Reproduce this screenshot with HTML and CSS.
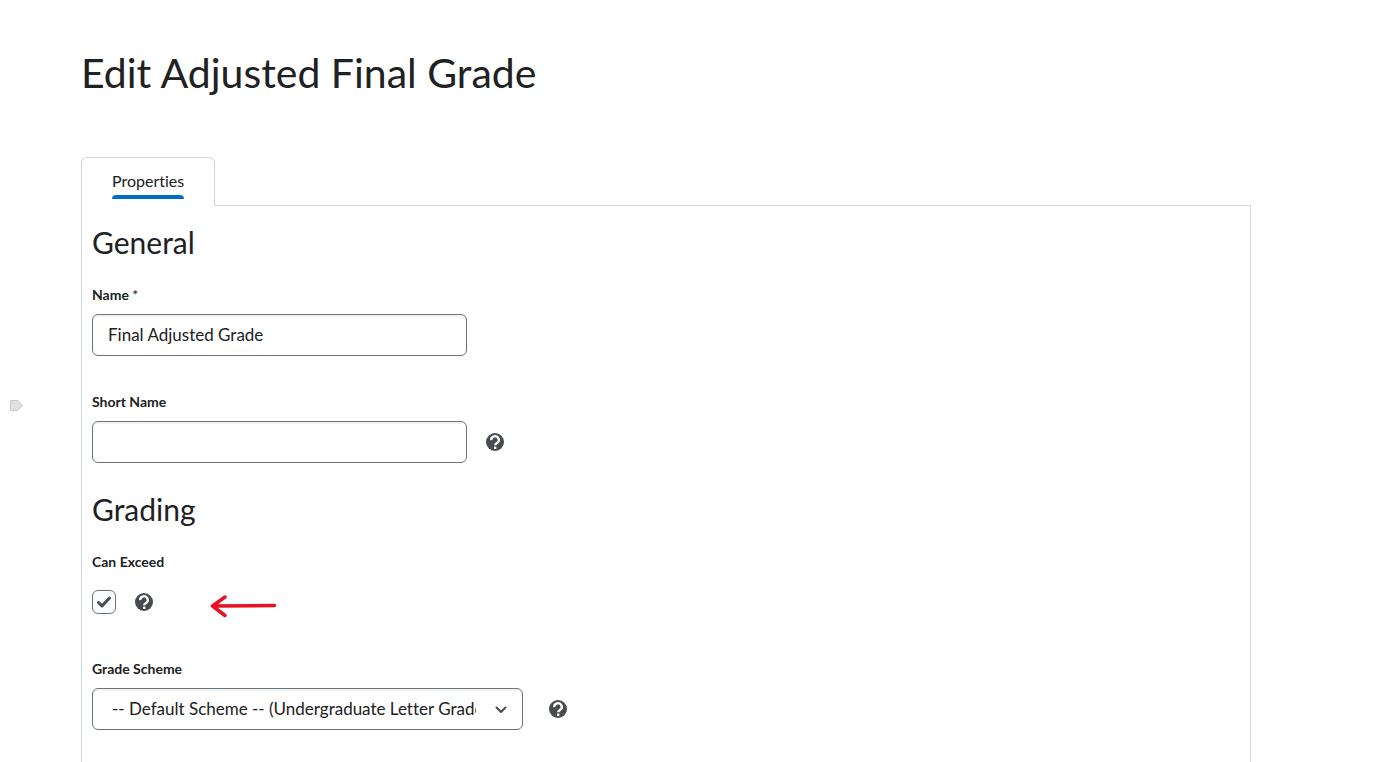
FILE: index.html
```html
<!DOCTYPE html>
<html lang="en">
<head>
    <meta charset="UTF-8">
    <meta name="viewport" content="width=device-width, initial-scale=1.0">
    <title>Edit Adjusted Final Grade</title>
    <link rel="stylesheet" href="styles.css">
</head>
<body>
    <!-- Shared icon -->
    <svg class="icon-defs" aria-hidden="true">
        <symbol id="icon-help" viewBox="0 0 18 18">
            <circle cx="9" cy="9" r="9" fill="#494c4e"/>
            <path d="M5.200 7.200A3.800 3.600 0 1 1 11 9.900C9.800 10.600 9.200 10.900 9.200 12.300" fill="none" stroke="#fff" stroke-width="2.300"/>
            <rect x="8" y="13.600" width="2.400" height="2.400" rx="0.500" fill="#fff"/>
        </symbol>
    </svg>

    <svg class="side-marker" viewBox="0 0 13 11" aria-hidden="true">
        <path d="M0.500 0.500h7.500l4.500 5-4.500 5h-7.500z" fill="#e1e1e1" stroke="#cacaca"/>
    </svg>

    <main class="page">
        <h1 class="page-title">Edit Adjusted Final Grade</h1>

        <div class="tabs" role="tablist">
            <button type="button" class="tab" role="tab" aria-selected="true">
                <span class="tab-text">Properties</span>
            </button>
        </div>

        <form class="panel">
            <section class="section">
                <h2 class="section-title">General</h2>
                <div class="fields">
                    <div class="field">
                        <label for="name">Name <span class="required">*</span></label>
                        <div class="control">
                            <input type="text" class="text-input" id="name" name="name" value="Final Adjusted Grade" required>
                        </div>
                    </div>
                    <div class="field">
                        <label for="shortName">Short Name</label>
                        <div class="control">
                            <input type="text" class="text-input" id="shortName" name="shortName">
                            <button type="button" class="help" aria-label="Short Name help">
                                <svg><use href="#icon-help"/></svg>
                            </button>
                        </div>
                    </div>
                </div>
            </section>

            <section class="section">
                <h2 class="section-title">Grading</h2>
                <div class="fields">
                    <div class="field">
                        <label for="canExceed">Can Exceed</label>
                        <div class="control">
                            <span class="checkbox-wrap">
                                <input type="checkbox" class="checkbox" id="canExceed" name="canExceed" checked>
                                <svg class="check" viewBox="0 0 24 24" aria-hidden="true">
                                    <path d="M6.500 12.500l3.500 3.500 7.500-8" fill="none" stroke="#494c4e" stroke-width="3" stroke-linecap="round" stroke-linejoin="round"/>
                                </svg>
                            </span>
                            <button type="button" class="help" aria-label="Can Exceed help">
                                <svg><use href="#icon-help"/></svg>
                            </button>
                            <svg class="arrow" viewBox="0 0 68 34" aria-hidden="true">
                                <path d="M65.500 20.500L3.500 21M16 12L3.500 21L16 30.500" fill="none" stroke="#e81123" stroke-width="3.500" stroke-linecap="round" stroke-linejoin="round"/>
                            </svg>
                        </div>
                    </div>
                    <div class="field">
                        <label for="gradeScheme">Grade Scheme</label>
                        <div class="control control-select">
                            <span class="select-wrap">
                                <select class="select" id="gradeScheme" name="gradeScheme">
                                    <option>-- Default Scheme -- (Undergraduate Letter Grade)</option>
                                </select>
                                <svg class="chevron" viewBox="0 0 12 8" aria-hidden="true">
                                    <path d="M1.500 1.500l4.500 4.500 4.500-4.500" fill="none" stroke="#494c4e" stroke-width="2" stroke-linecap="round" stroke-linejoin="round"/>
                                </svg>
                            </span>
                            <button type="button" class="help" aria-label="Grade Scheme help">
                                <svg><use href="#icon-help"/></svg>
                            </button>
                        </div>
                    </div>
                </div>
            </section>
        </form>
    </main>
</body>
</html>
```

FILE: styles.css
```css
* {
    box-sizing: border-box;
}
body {
    margin: 0;
    background-color: #ffffff;
    color: #202122;
    font-family: Lato, sans-serif;
    font-size: 16px;
    font-variant-ligatures: none;
    line-height: 24px;
}
.icon-defs {
    display: none;
}
.side-marker {
    position: fixed;
    left: 10px;
    top: 400px;
    width: 13px;
    height: 11px;
}
.page {
    display: flex;
    flex-direction: column;
    min-height: 100vh;
    padding: 49px 134px 0 81px;
}
.page-title {
    margin: 0 0 60px;
    font-size: 41px;
    font-weight: 400;
    line-height: 48px;
}
.tabs {
    display: flex;
    position: relative;
    margin-bottom: -1px;
}
.tab {
    padding: 11px 30px 7px;
    border: 1px solid #cdd5dc;
    border-bottom: none;
    border-radius: 6px 6px 0 0;
    background-color: #ffffff;
    color: inherit;
    font: inherit;
    font-variant-ligatures: none;
    cursor: pointer;
}
.tab-text {
    display: block;
}
.tab-text::after {
    content: "";
    display: block;
    height: 4px;
    margin-top: 2px;
    border-radius: 4px 4px 0 0;
    background-color: #006fbf;
}
.panel {
    display: flex;
    flex: 1;
    flex-direction: column;
    gap: 28px;
    padding: 18px 10px 32px;
    border: 1px solid #cdd5dc;
    border-bottom: none;
}
.section-title {
    margin: 0 0 25px;
    font-size: 30px;
    font-weight: 400;
    line-height: 36px;
}
.fields {
    display: flex;
    flex-direction: column;
    gap: 36px;
}
.field label {
    display: block;
    margin-bottom: 9px;
    font-size: 14px;
    font-weight: bold;
    line-height: 20px;
}
.required {
    font-weight: 400;
}
.control {
    display: flex;
    align-items: center;
    gap: 19px;
    height: 42px;
}
.control-select {
    gap: 26px;
}
.text-input,
.select {
    height: 42px;
    border: 1px solid #6e7376;
    border-radius: 6px;
    background-color: #ffffff;
    box-shadow: inset 0 2px 0 #f1f3f5;
    color: inherit;
    font-family: inherit;
    font-size: 17px;
    font-variant-ligatures: none;
}
.text-input {
    width: 375px;
    padding: 0 15px 2px;
}
.select-wrap,
.checkbox-wrap {
    display: flex;
    position: relative;
}
.select {
    width: 431px;
    padding: 0 46px 2px 19px;
    appearance: none;
}
.chevron {
    position: absolute;
    right: 16px;
    top: 18px;
    width: 12px;
    height: 8px;
    pointer-events: none;
}
.checkbox {
    width: 24px;
    height: 24px;
    margin: 0;
    border: 1px solid #6e7376;
    border-radius: 6px;
    background-color: #f9fbff;
    appearance: none;
}
.check {
    display: none;
    position: absolute;
    left: 0;
    top: 0;
    width: 24px;
    height: 24px;
    pointer-events: none;
}
.checkbox:checked + .check {
    display: block;
}
.help {
    display: flex;
    padding: 0;
    border: none;
    background: none;
    cursor: pointer;
}
.help svg {
    width: 18px;
    height: 18px;
}
.arrow {
    width: 68px;
    height: 34px;
    margin-left: 37px;
}
```
